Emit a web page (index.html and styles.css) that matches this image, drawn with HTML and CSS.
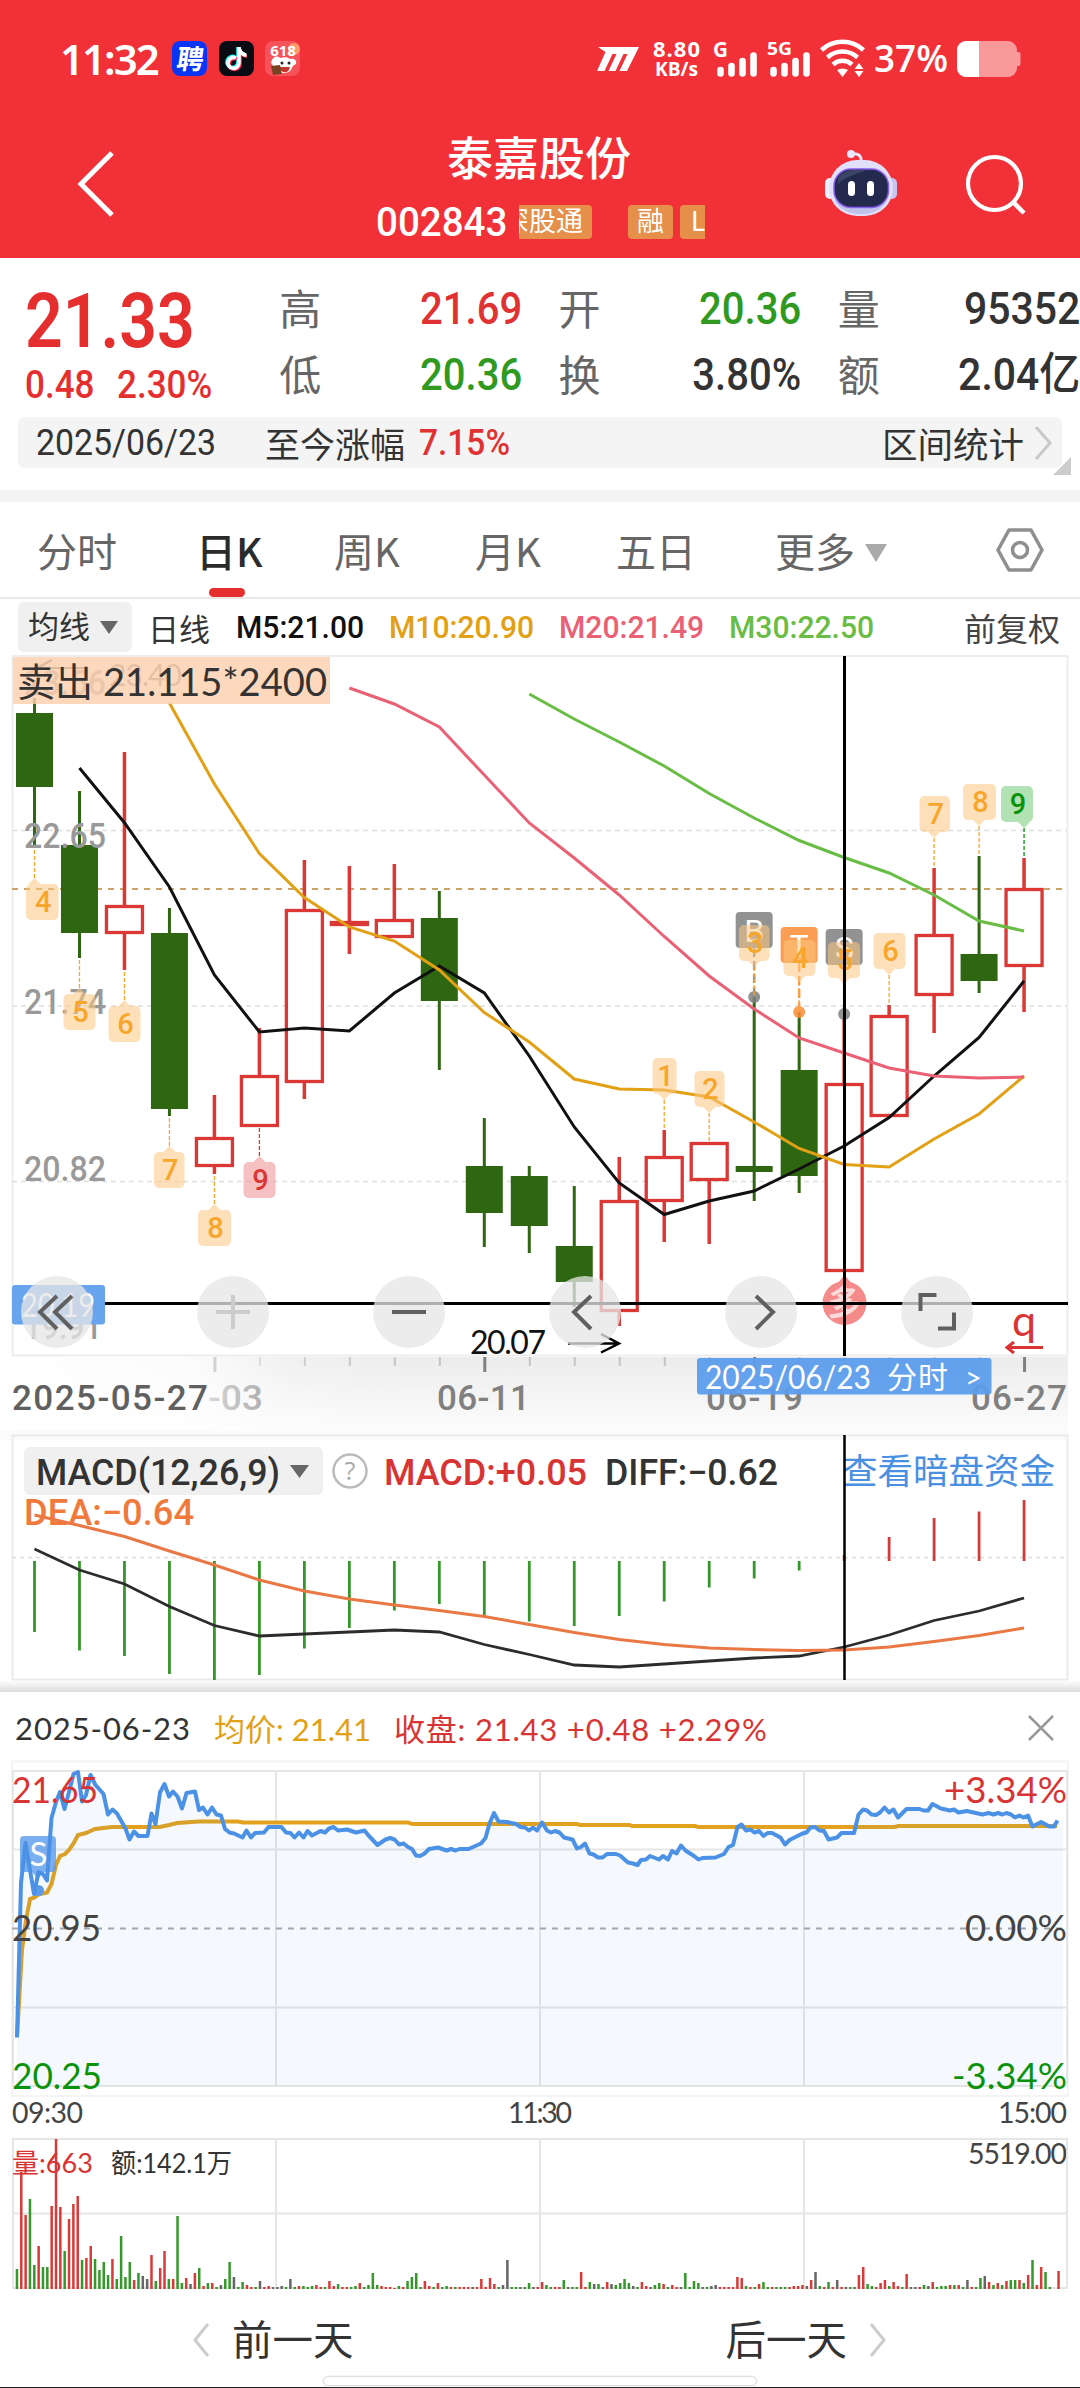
FILE: index.html
```html
<!DOCTYPE html>
<html lang="zh-CN">
  <head>
    <meta charset="utf-8">
    <title>泰嘉股份 002843</title>
    <link rel="stylesheet" href="styles.css">
  </head>
<body>
    <div id="header">
        <div class="statusbar">
            <div class="time">11:32</div>
            <svg class="app" viewBox="0 0 35 35">
                <rect width="35" height="35" rx="8" fill="#0a35f5"/>
                <text x="18" y="28" font-size="27" font-weight="bold" fill="#fff" text-anchor="middle" transform="skewX(-8) translate(3 0)">聘</text>
            </svg>
            <svg class="app" viewBox="0 0 35 35">
                <rect width="35" height="35" rx="8" fill="#0b0b14"/>
                <g fill="none" stroke-width="3.6">
                    <path d="M16 16a5.500 5.500 0 1 0 3 5V6c0 4 3 7 7 7" stroke="#25f4ee"/>
                    <path d="M18 18a5.500 5.500 0 1 0 3 5V8c0 4 3 7 7 7" stroke="#fe2c55"/>
                    <path d="M17 17a5.500 5.500 0 1 0 3 5V6c0 4 3 8 7.500 8" stroke="#fff"/>
                </g>
            </svg>
            <svg class="app" viewBox="0 0 35 35">
                <rect width="35" height="35" rx="8" fill="#f5525a"/>
                <circle cx="29" cy="8" r="6" fill="#ff9a6b"/>
                <path d="M6 22c2-8 7-7 9-5 4-1 8-1 10 1 5-1 7 2 6 5-3 1-4 3-5 6-3 4-12 4-15 0-2-2-3-5-5-7z" fill="#fff"/>
                <path d="M14 26h11c-1 7-9 7-11 0z" fill="#c7352f"/>
                <circle cx="17" cy="22" r="1.500" fill="#222"/><circle cx="24" cy="22" r="1.500" fill="#222"/>
                <path d="M6 25l9-1 2 9-9 1z" fill="#7a4220"/>
                <text x="18" y="15" font-size="15" font-weight="bold" fill="#fff" text-anchor="middle">618</text>
            </svg>
            <svg class="signals" viewBox="590 30 440 56">
                <path d="M598 47h41l-12 24h-7.500l8-17h-4l-8 17h-7l8-17h-4l-8 17h-7.500l8.500-19z" fill="#fff"/>
                <g fill="#fff" font-weight="bold">
                    <text x="653" y="56.500" font-size="22" textLength="47">8.80</text>
                    <text x="655" y="76" font-size="20" textLength="43" lengthAdjust="spacingAndGlyphs">KB/s</text>
                    <text x="713" y="57" font-size="21" textLength="15" lengthAdjust="spacingAndGlyphs">G</text>
                    <text x="767" y="54.500" font-size="18" textLength="25" lengthAdjust="spacingAndGlyphs">5G</text>
                </g>
                <g stroke="#fff" stroke-width="6.600" stroke-linecap="round">
                    <path d="M720.500 70v3.500M731.500 66v7.500M742.500 61v12.500M753.500 55.500v18"/>
                    <path d="M773.500 70v3.500M784.500 66v7.500M795.500 61v12.500M806.500 55.500v18"/>
                </g>
                <g fill="none" stroke="#fff" stroke-width="4.500">
                    <path d="M821.500 50a31 31 0 0 1 42 0"/>
                    <path d="M827.500 57.500a22 22 0 0 1 30 0"/>
                    <path d="M833 64.500a14 14 0 0 1 19 0"/>
                </g>
                <path d="M837 70q5.500-3 11 0l-5.500 7z" fill="#fff"/>
                <path d="M859 63l4.500 6h-9zM859 77l4.500-6h-9z" fill="#fff"/>
                <text x="874" y="72" font-size="38" font-weight="600" fill="#fff" textLength="74" lengthAdjust="spacingAndGlyphs">37%</text>
                <rect x="957" y="41" width="60" height="36" rx="9" fill="#fa999c"/>
                <path d="M1017 52h1.500a2 2 0 0 1 2 2v10a2 2 0 0 1-2 2h-1.500z" fill="#fa999c"/>
                <path d="M979 41v36h-13a9 9 0 0 1-9-9v-18a9 9 0 0 1 9-9z" fill="#fff"/>
            </svg>
        </div>
        <div class="titlebar">
            <svg class="back" viewBox="0 0 40 70"><path d="M36 4L5 35l31 31" fill="none" stroke="#fff" stroke-width="5"/></svg>
            <div class="title">
                <div class="name">泰嘉股份</div>
                <div class="code">
                    <span class="num">002843</span>
                    <div class="tags"><i class="cut">深股通</i><i>融</i><i class="level">L2</i></div>
                </div>
            </div>
            <svg class="robot" viewBox="824 148 76 70">
                <path d="M861 162c1-7-4-9-9-8" fill="none" stroke="#e9e6fb" stroke-width="3"/>
                <circle cx="851" cy="154" r="4" fill="#e9e6fb"/>
                <rect x="825" y="178" width="10" height="21" rx="5" fill="#f3f0ff"/>
                <rect x="887" y="178" width="10" height="21" rx="5" fill="#c9c3f0"/>
                <rect x="829" y="160" width="64" height="56" rx="28" fill="#e2dff8"/>
                <path d="M835 200c6 18 44 20 52 0-8 10-40 12-52 0z" fill="#c0c3ea"/>
                <rect x="834" y="169" width="54.500" height="38.500" rx="17" fill="#232a4d" stroke="#8a5cf0" stroke-width="1.500"/>
                <path d="M838 178c5-8 16-9 28-8-8 4-20 6-28 14z" fill="#3c4566"/>
                <rect x="848" y="181" width="7" height="15" rx="3.500" fill="#fff"/>
                <rect x="867" y="181" width="7" height="15" rx="3.500" fill="#fff"/>
            </svg>
            <svg class="search" viewBox="0 0 64 64"><circle cx="31.500" cy="29.500" r="26.500" fill="none" stroke="#fff" stroke-width="4.200"/><path d="M50 48l11 11" stroke="#fff" stroke-width="4.500"/></svg>
        </div>
    </div>

    <div id="quote">
        <div class="price">
            <div class="last"><span class="num">21.33</span></div>
            <div class="change"><span class="num">0.48</span><span class="num">2.30%</span></div>
        </div>
        <dl class="c1">
            <dt>高</dt><dd class="up">21.69</dd>
            <dt>低</dt><dd class="down">20.36</dd>
        </dl>
        <dl class="c2">
            <dt>开</dt><dd class="down">20.36</dd>
            <dt>换</dt><dd>3.80%</dd>
        </dl>
        <dl class="c3">
            <dt>量</dt><dd>95352</dd>
            <dt>额</dt><dd>2.04亿</dd>
        </dl>
    </div>
    <div id="range">
        <span class="num date">2025/06/23</span>
        <span class="label">至今涨幅</span>
        <span class="num up">7.15%</span>
        <span class="stat">区间统计</span>
        <svg class="arrow" viewBox="0 0 20 36"><path d="M3 2l14 16L3 34" fill="none" stroke="#c8c8c8" stroke-width="3"/></svg>
        <div class="corner"></div>
    </div>

    <div id="tabs">
        <div class="tab">分时</div>
        <div class="tab k on">日K</div>
        <div class="tab k2">周K</div>
        <div class="tab k2">月K</div>
        <div class="tab">五日</div>
        <div class="tab more">更多<b></b></div>
        <svg class="setting" viewBox="0 0 48 46"><path d="M13 3h22l11 20-11 20H13L2 23z" fill="none" stroke="#8f8f8f" stroke-width="3.600" stroke-linejoin="round"/><circle cx="24" cy="23" r="7.500" fill="none" stroke="#8f8f8f" stroke-width="3.600"/></svg>
    </div>

    <div id="legend">
        <div class="pick">均线<b></b></div>
        <span class="period">日线</span>
        <span class="ma m5">M5:21.00</span>
        <span class="ma m10">M10:20.90</span>
        <span class="ma m20">M20:21.49</span>
        <span class="ma m30">M30:22.50</span>
        <span class="adjust">前复权</span>
    </div>

    <svg id="kline" viewBox="0 655 1080 775">
        <defs>
            <linearGradient id="fade" x1="0" y1="0" x2="0" y2="1"><stop offset="0" stop-color="#ececec"/><stop offset="1" stop-color="#fcfcfc"/></linearGradient>
            <linearGradient id="veil" x1="0" y1="0" x2="1" y2="0"><stop offset="0" stop-color="#fff"/><stop offset=".45" stop-color="#fff" stop-opacity=".8"/><stop offset=".7" stop-color="#fff" stop-opacity=".2"/><stop offset="1" stop-color="#fff" stop-opacity="0"/></linearGradient>
        </defs>
        <rect x="0" y="1357" width="1068" height="73" fill="url(#fade)"/>
        <g id="ticks"></g>
        <g class="axis">
            <text x="208" y="1410" textLength="55" lengthAdjust="spacingAndGlyphs">-03</text>
            <text x="437" y="1410" textLength="93">06-11</text>
            <text x="706" y="1410" textLength="97">06-19</text>
            <text x="971" y="1410" textLength="96">06-27</text>
        </g>
        <rect x="0" y="1357" width="420" height="73" fill="url(#veil)"/>
        <text class="axis first" x="12" y="1410" textLength="196">2025-05-27</text>
        <rect x="12.500" y="656" width="1055" height="699.500" fill="none" stroke="#ededed" stroke-width="2"/>
        <path d="M12 830.500H1067M12 1006H1067M12 1181.500H1067" stroke="#dedede" stroke-width="1.500" stroke-dasharray="5 4"/>
        <path d="M12 889H1067" stroke="#c9a468" stroke-width="2" stroke-dasharray="6 6"/>
        <g id="candles"></g>
        <g id="ma"></g>
        <g class="price-label">
            <text x="24" y="695" textLength="82" lengthAdjust="spacingAndGlyphs">23.56</text>
            <text x="24" y="848" textLength="82" lengthAdjust="spacingAndGlyphs">22.65</text>
            <text x="24" y="1014" textLength="82" lengthAdjust="spacingAndGlyphs">21.74</text>
            <text x="24" y="1181" textLength="82" lengthAdjust="spacingAndGlyphs">20.82</text>
            <text x="24" y="1339" textLength="78" lengthAdjust="spacingAndGlyphs">19.91</text>
        </g>
        <text class="lato" x="109" y="686" font-size="30" fill="#777" textLength="73">23.40</text>
        <path d="M52 660l-15 8h48" fill="none" stroke="#555" stroke-width="2"/>
        <g id="badges"></g>
        <rect x="13" y="657" width="317" height="47" fill="#fdd0ae" fill-opacity=".82"/>
        <text class="lato" x="17" y="695.500" font-size="39" fill="#333" textLength="310" lengthAdjust="spacingAndGlyphs">卖出 21.115*2400</text>
        <text class="lato" x="470" y="1354" font-size="32" fill="#111" textLength="76">20.07</text>
        <path d="M568 1343.500h51M601 1334l18 9.500-18 9" fill="none" stroke="#000" stroke-width="2.500"/>
        <g fill="#f58a8a"><circle cx="844.500" cy="1303" r="22"/><path d="M844.500 1275l11 13h-22z"/></g>
        <text x="844.500" y="1315" font-size="34" font-weight="bold" fill="#fbdada" text-anchor="middle">多</text>
        <path d="M844.500 656V1356M12 1303.500H1068" stroke="#000" stroke-width="3"/>
        <rect x="12" y="1285" width="93" height="39.500" rx="3" fill="#68a4ee"/>
        <text class="lato" x="21" y="1316.500" font-size="32" fill="#fff" textLength="74" lengthAdjust="spacingAndGlyphs">20.19</text>
        <rect x="697" y="1358" width="294.500" height="36.500" rx="3" fill="#5b9cec" fill-opacity=".94"/>
        <g class="lato" font-size="32" fill="#fff">
            <text x="705" y="1388.500" textLength="166" lengthAdjust="spacingAndGlyphs">2025/06/23</text>
            <text x="887" y="1388" font-size="30" textLength="61">分时</text>
            <text x="965" y="1388" font-size="29">&gt;</text>
        </g>
        <text class="lato" x="1012" y="1336" font-size="43" fill="#d93434">q</text>
        <path d="M1043 1347.500h-35M1014 1342l-7 5.500 7 5.500" fill="none" stroke="#d93434" stroke-width="3"/>
        <g class="tools">
            <circle cx="57" cy="1312" r="36"/>
            <circle cx="233" cy="1312" r="36"/>
            <circle cx="409" cy="1312" r="36"/>
            <circle cx="585" cy="1312" r="36"/>
            <circle cx="761" cy="1312" r="36"/>
            <circle cx="937" cy="1312" r="36"/>
            <path d="M57 1296l-17 16 17 17M72 1296l-17 16 17 17"/>
            <path class="off" d="M216 1312h34M233 1295v34"/>
            <path d="M392 1312h34"/>
            <path d="M591 1296l-17 16 17 17"/>
            <path d="M756 1296l17 16-17 17"/>
            <path d="M920.500 1311v-16h16M938 1328.500h16v-16"/>
        </g>
    </svg>

    <svg id="macd" viewBox="0 1430 1080 262">
        <rect x="0" y="1430" width="1068" height="10" fill="#fbfbfb"/>
        <rect x="12.500" y="1435.500" width="1055" height="244" fill="none" stroke="#ebebeb" stroke-width="2"/>
        <path d="M12 1557.500H1067" stroke="#e3e3e3" stroke-width="2" stroke-dasharray="4 4"/>
        <rect x="24" y="1447" width="299" height="48" rx="6" fill="#f0f0f0"/>
        <path d="M290 1465h19l-9.500 13z" fill="#666"/>
        <circle cx="350" cy="1471" r="16.500" fill="none" stroke="#bbb" stroke-width="2.500"/>
        <text x="350" y="1480" font-size="25" fill="#aaa" text-anchor="middle">?</text>
        <g class="values">
            <text x="36" y="1485" fill="#333" textLength="244" lengthAdjust="spacingAndGlyphs">MACD(12,26,9)</text>
            <text x="384" y="1485" fill="#d93434" textLength="203" lengthAdjust="spacingAndGlyphs">MACD:+0.05</text>
            <text x="605" y="1485" fill="#333" textLength="173" lengthAdjust="spacingAndGlyphs">DIFF:−0.62</text>
            <text x="24" y="1524.500" fill="#f07a3c" textLength="170" lengthAdjust="spacingAndGlyphs">DEA:−0.64</text>
        </g>
        <text x="842" y="1484" font-size="35.500" fill="#4a90e2" textLength="213">查看暗盘资金</text>
        <g id="macdbars"></g>
        <path d="M844.500 1435V1680" stroke="#000" stroke-width="2.500"/>
    </svg>

    <div id="dayinfo">
        <span class="d">2025-06-23</span>
        <span class="avg">均价: 21.41</span>
        <span class="close">收盘: 21.43 +0.48 +2.29%</span>
        <svg class="x" viewBox="0 0 28 28"><path d="M2 2l24 24M26 2L2 26" stroke="#999" stroke-width="2.500"/></svg>
    </div>

    <svg id="minute" viewBox="0 1760 1080 540">
        <path d="M12 1761.500H1068V2096H12z" fill="none" stroke="#f4f4f4" stroke-width="2"/>
        <path d="M13 1771H1067V2086H13zM276 1771V2086M540 1771V2086M804 1771V2086M12 1849.500H1067M12 2007.500H1067" fill="none" stroke="#e6e6e6" stroke-width="2"/>
        <path d="M12 1928.500H1067" stroke="#a5a8ac" stroke-width="2" stroke-dasharray="6 6"/>
        <g id="trend"></g>
        <g font-size="36" class="lato">
            <text x="12" y="1803" fill="#d93434" textLength="86" lengthAdjust="spacingAndGlyphs">21.65</text>
            <text x="12" y="1941" fill="#444" textLength="89" lengthAdjust="spacingAndGlyphs">20.95</text>
            <text x="12" y="2089" fill="#0a930a" textLength="90" lengthAdjust="spacingAndGlyphs">20.25</text>
            <text x="944" y="1803" fill="#d93434" textLength="123" lengthAdjust="spacingAndGlyphs">+3.34%</text>
            <text x="965" y="1941" fill="#444" textLength="102" lengthAdjust="spacingAndGlyphs">0.00%</text>
            <text x="952" y="2089" fill="#0a930a" textLength="115" lengthAdjust="spacingAndGlyphs">-3.34%</text>
        </g>
        <g font-size="28.500" class="lato" fill="#444">
            <text x="12" y="2122.500" textLength="71">09:30</text>
            <text x="508" y="2122.500" textLength="64">11:30</text>
            <text x="998" y="2122.500" textLength="69">15:00</text>
            <text x="968" y="2164" textLength="99">5519.00</text>
        </g>
        <path d="M13 2139H1067V2288H13zM276 2139V2288M540 2139V2288M804 2139V2288M12 2213.500H1067" fill="none" stroke="#e6e6e6" stroke-width="2"/>
        <g id="volume"></g>
        <g font-size="27" class="lato">
            <text x="12" y="2173" fill="#d93434" textLength="81" lengthAdjust="spacingAndGlyphs">量:663</text>
            <text x="111" y="2173" fill="#333" textLength="121" lengthAdjust="spacingAndGlyphs">额:142.1万</text>
        </g>
    </svg>

    <div id="pager">
        <div class="prev"><svg viewBox="0 0 20 36"><path d="M17 2L4 18l13 16" fill="none" stroke="#ccc" stroke-width="3"/></svg>前一天</div>
        <div class="next">后一天<svg viewBox="0 0 20 36"><path d="M3 2l13 16L3 34" fill="none" stroke="#ccc" stroke-width="3"/></svg></div>
    </div>
    <div id="homebar"><div></div></div>
    <script src="chart.js"></script>
</body>
</html>
```
FILE: styles.css
```css
* {
    margin: 0;
    padding: 0;
    box-sizing: border-box;
}
body {
    width: 1080px;
    height: 2388px;
    overflow: hidden;
    background: #fff;
    color: #333;
    font-family: Lato, "Noto Sans CJK SC", sans-serif;
}
svg {
    display: block;
    flex: none;
}
svg text {
    font-family: "Open Sans", "Noto Sans CJK SC", sans-serif;
}
svg .lato, svg .lato text {
    font-family: Lato, "Noto Sans CJK SC", sans-serif;
}
svg .values text, .axis, svg .axis text, svg .axis.first, svg .price-label text, svg #badges text {
    font-family: Roboto, "Noto Sans CJK SC", sans-serif;
}
.num, dd, .ma {
    display: inline-block;
    font-family: Roboto, "Noto Sans CJK SC", sans-serif;
    font-weight: 500;
    transform: scaleX(0.89);
    transform-origin: left center;
    white-space: nowrap;
}
.up {
    color: #e03232;
}
.down {
    color: #2f9a1f;
}

/* header */
#header {
    height: 258px;
    background: #f23038;
    color: #fff;
}
.statusbar {
    height: 116px;
    padding-left: 60px;
    display: flex;
    align-items: center;
}
.statusbar .time {
    width: 112px;
    font-family: "Noto Sans", sans-serif;
    font-size: 42px;
    font-weight: 600;
    letter-spacing: -2px;
}
.statusbar .app {
    width: 35px;
    height: 35px;
    margin-right: 11.5px;
}
.statusbar .signals {
    width: 440px;
    height: 56px;
    margin-left: 278px;
}
.titlebar {
    height: 142px;
    display: flex;
    padding-left: 76px;
}
.back {
    width: 40px;
    height: 70px;
    margin-top: 33px;
}
.title {
    width: 330px;
    margin-left: 260px;
}
.title .name {
    height: 84px;
    line-height: 84px;
    padding-left: 71px;
    font-size: 46px;
    font-weight: 500;
}
.title .code {
    display: flex;
    height: 44px;
    align-items: center;
}
.title .code .num {
    width: 143px;
    font-size: 41px;
    line-height: 44px;
    transform: scaleX(0.94);
}
.tags {
    display: flex;
    width: 186px;
    height: 34px;
    overflow: hidden;
}
.tags i {
    flex: none;
    height: 34px;
    padding: 0 9px;
    margin-right: 7px;
    border-radius: 4px;
    background: #e58f4a;
    font-size: 27px;
    line-height: 32px;
    font-style: normal;
}
.tags .cut {
    margin-left: -26px;
    margin-right: 36px;
}
.tags .level {
    padding-left: 11px;
}
.robot {
    width: 76px;
    height: 70px;
    margin: 32px 0 0 118px;
}
.search {
    width: 64px;
    height: 64px;
    margin: 38px 0 0 63px;
}

/* quote */
#quote {
    height: 159px;
    display: flex;
    overflow: hidden;
}
.price {
    width: 280px;
    padding: 17px 0 0 25px;
    color: #e52f2f;
}
.price .last {
    height: 86px;
    font-size: 76px;
    line-height: 86px;
}
.price .last .num {
    transform: scaleX(0.87);
    font-weight: 600;
}
.price .change {
    height: 44px;
    font-size: 38.5px;
    line-height: 44px;
}
.change .num {
    transform: scaleX(0.91);
}
.change .num:first-child {
    width: 92px;
}
dl {
    display: grid;
    grid-template-columns: 42px 1fr;
    grid-template-rows: 66px 66px;
    align-items: center;
    width: 244px;
    height: 132px;
    margin: 18px 36px 0 0;
}
dl.c3 {
    width: 243px;
    margin-right: 0;
}
dt {
    font-size: 42px;
    line-height: 66px;
    color: #666;
}
dd {
    font-size: 45px;
    line-height: 66px;
    text-align: right;
    transform-origin: right center;
}
.c3 dd {
    transform: scaleX(0.91);
}
#range {
    position: relative;
    display: flex;
    align-items: center;
    height: 51px;
    margin: 0 18px 22px;
    padding-left: 18px;
    border-radius: 6px;
    background: #f4f4f4;
    font-size: 35px;
}
#range .date {
    width: 229px;
    font-size: 36px;
    font-weight: 400;
    transform: scaleX(0.94);
}
#range .label {
    width: 154px;
}
#range .up {
    font-size: 36px;
    transform: scaleX(0.93);
}
#range .stat {
    margin-left: auto;
    font-size: 35.5px;
}
#range .arrow {
    width: 20px;
    height: 36px;
    margin: 0 9px 0 9px;
}
#range .corner {
    position: absolute;
    right: -9px;
    bottom: -7px;
    border-left: 18px solid transparent;
    border-bottom: 18px solid #ccc;
}

/* tabs */
#tabs {
    display: flex;
    height: 109px;
    padding: 0 36px 0 37px;
    border-top: 12px solid #f4f4f4;
    border-bottom: 2px solid #e8e8e8;
    align-items: center;
    font-family: "Noto Sans CJK SC", sans-serif;
    font-size: 40px;
    color: #666;
}
.tab {
    position: relative;
    width: 159px;
    height: 95px;
    line-height: 97px;
    white-space: nowrap;
}
.tab.k {
    width: 138px;
}
.tab.k2 {
    width: 141px;
}
.tab.on {
    color: #2b2b2b;
    font-weight: 500;
}
.tab.on::after {
    content: "";
    position: absolute;
    left: 13px;
    bottom: 0;
    width: 36px;
    height: 9px;
    border-radius: 5px;
    background: #e62e2e;
}
.tab b, .pick b {
    display: inline-block;
    margin-left: 10px;
    border: 11px solid transparent;
    border-top: 18px solid #aaa;
    border-bottom: 0;
    vertical-align: 5px;
}
.setting {
    width: 48px;
    height: 46px;
    margin-left: auto;
}

/* moving averages */
#legend {
    display: flex;
    height: 56px;
    padding: 3px 20px 3px 18px;
    align-items: center;
    font-size: 31px;
}
.pick {
    width: 114px;
    height: 50px;
    padding-left: 10px;
    line-height: 49px;
    border-radius: 6px;
    background: #f0f0f0;
    white-space: nowrap;
}
.pick b {
    border-width: 13px 9px 0;
    border-top-color: #666;
    margin-left: 10px;
    vertical-align: 4px;
}
.period {
    margin-left: 16px;
    width: 88px;
}
.ma {
    width: 170px;
    font-size: 32px;
    transform: scaleX(0.94);
}
.m5 { color: #111; width: 153px; }
.m10 { color: #e2a015; }
.m20 { color: #ea6074; }
.m30 { color: #69bd45; }
.adjust {
    margin-left: auto;
    font-size: 32px;
    color: #444;
}

/* charts */
#kline {
    width: 1080px;
    height: 775px;
}
.axis {
    font-size: 35px;
    fill: #808080;
    font-weight: 500;
}
.axis.first {
    fill: #606060;
}
.price-label {
    font-size: 35px;
    font-weight: 500;
    fill: #999;
}
.tools circle {
    fill: #e6e6e6;
    fill-opacity: 0.76;
}
.tools path {
    fill: none;
    stroke: #606060;
    stroke-width: 4;
}
.tools .off {
    stroke: #ccc;
}
#macd {
    width: 1080px;
    height: 262px;
    background: linear-gradient(to bottom, #fff 250px, #dcdcdc 262px);
}
.values text {
    font-size: 36px;
    font-weight: 500;
}

/* day detail */
#dayinfo {
    display: flex;
    height: 68px;
    padding: 3px 25px 0 15px;
    align-items: center;
    font-size: 31px;
    white-space: nowrap;
}
#dayinfo .d {
    width: 199px;
    letter-spacing: 0.9px;
}
#dayinfo .avg {
    width: 180px;
    color: #e2a015;
}
#dayinfo .close {
    color: #d93434;
    letter-spacing: 0.8px;
}
#dayinfo .x {
    width: 28px;
    height: 28px;
    margin-left: auto;
}
#minute {
    width: 1080px;
    height: 540px;
}
#pager {
    display: flex;
    justify-content: space-between;
    height: 76px;
    padding: 3px 192px 0 191px;
    font-size: 40.5px;
    line-height: 73px;
}
#pager div {
    display: flex;
    align-items: center;
    gap: 21px;
}
#pager svg {
    width: 20px;
    height: 36px;
}
#homebar {
    height: 12px;
    border-bottom: 1px solid #222;
}
#homebar div {
    width: 434px;
    height: 10px;
    margin: 0 auto;
    border: 1px solid #ddd;
    border-radius: 5px;
    box-shadow: 0 0 2px #ddd;
}
```
FILE: chart.js
```js
var GREEN = "#2f6612", RED = "#da3735";

function put(id, html) {
    document.getElementById(id).innerHTML += html;
}
function cx(i) {
    return 34.5 + 44.98 * i;
}
function line(arr, start, color, width) {
    var pts = arr.map(function (y, i) { return cx(i + start) + "," + y; }).join(" ");
    return '<polyline points="' + pts + '" fill="none" stroke="' + color + '" stroke-width="' + width + '"/>';
}

// [direction, body top, body bottom, wick top, wick bottom]
var candles = [
    ["g", 713, 787, 698, 848], ["g", 845, 933, 791, 958], ["r", 905, 934, 752, 970], ["g", 933, 1109, 908, 1116],
    ["r", 1137, 1167, 1095, 1174], ["r", 1075, 1127, 1028, 1127], ["r", 909, 1083, 860, 1099], ["r", 921, 926, 866, 954],
    ["r", 919, 938, 864, 938], ["g", 918, 1001, 891, 1070], ["g", 1166, 1213, 1118, 1247], ["g", 1176, 1226, 1166, 1253],
    ["g", 1246, 1282, 1186, 1307], ["r", 1200, 1312, 1157, 1326], ["r", 1156, 1202, 1130, 1242], ["r", 1142, 1181, 1142, 1244],
    ["g", 1166, 1172, 997, 1201], ["g", 1070, 1176, 1012, 1193], ["r", 1083, 1272, 1018, 1272], ["r", 1015, 1117, 1005, 1117],
    ["r", 934, 996, 868, 1033], ["g", 954, 981, 856, 993], ["r", 888, 967, 858, 1012]
];
candles.forEach(function (c, i) {
    var x = cx(i), s = "";
    if (c[0] == "g") {
        s += '<path d="M' + x + " " + c[3] + "V" + c[4] + '" stroke="' + GREEN + '" stroke-width="3"/>';
        s += '<rect x="' + (x - 18.5) + '" y="' + c[1] + '" width="37" height="' + (c[2] - c[1]) + '" fill="' + GREEN + '"/>';
    } else {
        s += '<path d="M' + x + " " + c[3] + "V" + c[1] + "M" + x + " " + c[2] + "V" + c[4] + '" stroke="' + RED + '" stroke-width="3.5"/>';
        s += '<rect x="' + (x - 18) + '" y="' + (c[1] + 1.5) + '" width="36" height="' + (c[2] - c[1] - 3) + '" fill="#fff" stroke="' + RED + '" stroke-width="3.3"/>';
    }
    put("candles", s);
});

put("ma",
    line([768, 822.7, 887, 975, 1032, 1028, 1031, 993, 966, 993, 1056, 1127, 1183, 1214.5, 1201, 1191, 1169, 1146, 1117.5, 1076, 1037.5, 981], 1, "#111", 3) +
    line([703, 784, 853.5, 897.5, 927, 941, 970, 1012.5, 1042, 1079, 1089, 1090, 1097, 1122, 1148.5, 1164.5, 1167, 1139, 1114, 1076], 3, "#e2a015", 3) +
    line([688, 704, 727, 775, 823, 858, 895, 936.5, 976, 1009, 1038, 1053, 1068, 1076, 1078, 1077], 7, "#ea6074", 3) +
    line([694, 719, 742, 766, 793.5, 818, 840.5, 857.5, 873, 895, 921, 931], 11, "#69bd45", 3));

// axis ticks
for (var t = 4; t < 23; t++) {
    var big = t == 4 || t == 10 || t == 16 || t == 22;
    put("ticks", '<path d="M' + (cx(t) + 0.5) + " 1357v" + (big ? 15 : 9) + '" stroke="' + (big ? "#808080" : "#c4c4c4") + '" stroke-width="' + (big ? 3 : 2) + '"/>');
}

// trade marks
[[16, "B", 912, "#808080", 997], [17, "T", 927, "#fb8c36", 1012], [18, "S", 929, "#808080", 1014]].forEach(function (m) {
    var x = cx(m[0]);
    put("badges", '<g opacity=".85"><path d="M' + x + " " + (m[2] + 36) + "V" + m[4] + '" stroke="' + m[3] + '" stroke-width="2.5" stroke-dasharray="9 4"/>' +
        '<rect x="' + (x - 18.5) + '" y="' + m[2] + '" width="37" height="36" rx="4" fill="' + m[3] + '"/>' +
        '<circle cx="' + x + '" cy="' + m[4] + '" r="6" fill="' + m[3] + '"/></g>' +
        '<text x="' + x + '" y="' + (m[2] + 30) + '" font-size="32" fill="#fff" text-anchor="middle">' + m[1] + "</text>");
});

// nine-turn counters: [candle, number, left, width, top, side, wick end]
[
    [0, 4, 26, 32.5, 884, "b", 848], [1, 5, 63.5, 32, 994, "b", 958], [2, 6, 108.5, 32, 1006, "b", 970], [3, 7, 154, 30.5, 1152, "b", 1116],
    [4, 8, 198, 33, 1210, "b", 1174], [5, 9, 243.5, 32, 1162, "b", 1127],
    [14, 1, 652.5, 24, 1058, "t", 1130], [15, 2, 694.5, 30, 1071, "t", 1143], [16, 3, 739, 30.5, 925, "t", 997], [17, 4, 783.5, 32, 940, "t", 1012],
    [18, 5, 828, 32, 942, "t", 1014], [19, 6, 873.5, 32, 933, "t", 1005], [20, 7, 919.5, 30.5, 796, "t", 868], [21, 8, 963, 33, 784, "t", 856],
    [22, 9, 1001, 32, 786, "t", 858]
].forEach(function (b) {
    var x = cx(b[0]), col = "#f7a62b", bg = "#fdc880", y = b[4], tip, from;
    if (b[1] == 9) {
        col = b[5] == "b" ? "#da3735" : "#0a930a";
        bg = b[5] == "b" ? "#f08f92" : "#74cb78";
    }
    if (b[5] == "b") {
        tip = "M" + (x - 6) + " " + y + "l6-6 6 6z";
        from = y - 6;
    } else {
        tip = "M" + (x - 6) + " " + (y + 36) + "l6 6 6-6z";
        from = y + 42;
    }
    put("badges", '<path d="M' + x + " " + from + "V" + b[6] + '" stroke="' + col + '" stroke-width="1.3" stroke-dasharray="4 2"/>' +
        '<g fill="' + bg + '" opacity=".55"><rect x="' + b[2] + '" y="' + y + '" width="' + b[3] + '" height="36" rx="5"/><path d="' + tip + '"/></g>' +
        '<text x="' + (b[2] + b[3] / 2 + 1) + '" y="' + (y + 28) + '" font-size="29" font-weight="500" fill="' + col + '" text-anchor="middle">' + b[1] + "</text>");
});

// MACD
[1632, 1650.5, 1656, 1674, 1680, 1675, 1648.5, 1628, 1610.5, 1604, 1616, 1621.5, 1626, 1616, 1601.5, 1587.5, 1578.5, 1570.5, 1555, 1537, 1518, 1511.5, 1500].forEach(function (y, i) {
    put("macdbars", '<path d="M' + cx(i) + " 1561V" + y + '" stroke="' + (y > 1561 ? "#35962a" : "#d23b3b") + '" stroke-width="2.8"/>');
});
put("macdbars",
    line([1549, 1570, 1584, 1606.5, 1625.5, 1636, 1634, 1632, 1630, 1632, 1644.5, 1654.5, 1665, 1667, 1664, 1661, 1658, 1656, 1647, 1635, 1620.5, 1611, 1598], 0, "#2c2c2c", 2.8) +
    line([1515, 1525.5, 1536.5, 1551, 1565, 1580, 1591, 1599, 1605, 1610.5, 1616.5, 1624.5, 1632.5, 1639.5, 1644.5, 1648, 1649.5, 1650.5, 1650, 1647, 1641.5, 1635.5, 1628], 0, "#ea7845", 3));

// intraday
var price = "17,2037.5 21,1883 25.5,1843 30.5,1873 34,1894 38.5,1872 43,1874 47,1880.5 51.5,1818 56,1802 60,1792 64.5,1809 69,1792 73.5,1774 78,1772 82,1801.5 86,1795 90.5,1775 95.5,1785 103.5,1794 108,1814.5 112.5,1809.5 117,1813.5 125.5,1828.5 129.5,1839.5 134,1831.5 138.5,1836 147.5,1836 151.5,1813.5 155.5,1824 160,1792.5 164.5,1784 169,1796.5 173,1791.5 177.5,1796.5 182,1808.5 186.5,1793 195,1791.5 199,1810 203,1807.5 207.5,1814.5 212,1807.5 216.5,1814.5 221,1815.5 225,1829 229.5,1832.5 234,1833.5 242.5,1837.5 246.5,1830.5 251,1837.5 255,1833 264,1832.5 268.5,1827 281.5,1827 286,1832.5 290.5,1833 294.5,1837.5 299,1832.5 303.5,1837.5 307.5,1831 312,1835.5 320.5,1831 325,1832.5 329,1828.5 333.5,1827 338,1830.5 347,1829.5 356,1832.5 364.5,1830.5 368.5,1835.5 377.5,1845 385.5,1839.5 390,1838 394.5,1839.5 399,1844.5 403.5,1843.5 408,1847 412,1849 416,1855.5 420,1856 424.5,1853.5 429,1849 438,1847.5 446.5,1850.5 451,1849 455.5,1850.5 459.5,1849 468.5,1849 481,1843.5 485.5,1838 489.5,1823.5 494,1813 498.5,1821.5 507,1822 516,1824 520.5,1827 525,1827.5 529,1830.5 533,1827.5 537,1830.5 " +
    "542,1822.5 547,1830.5 551,1832.5 555,1831 559.5,1832.5 564,1837.5 572.5,1839.5 577,1848.5 581,1847 585,1843.5 589.5,1853.5 593.5,1854.5 598,1857.5 602.5,1857.5 607,1854 616,1854 620,1855.5 628,1862.5 633,1863.5 637.5,1865 641,1860 646,1859.5 650,1856 659,1859.5 663,1856 668,1859.5 672,1851 676.5,1853.5 681,1845.5 685.5,1850.5 694,1856 698.5,1859.5 702.5,1858 715.5,1857.5 724,1854 728.5,1847 733,1845 737.5,1827 741.5,1824.5 746,1830.5 750.5,1829.5 754.5,1832.5 759,1831 763.5,1836 767.5,1833 772,1833 780.5,1837.5 785,1844.5 789.5,1840 802.5,1833.5 806.5,1832.5 810.5,1827.5 815,1827 819.5,1830.5 824,1831 828.5,1839.5 837,1837.5 841.5,1833 854,1833 858.5,1814.5 863,1809.5 867,1810.5 871.5,1814.5 876,1815 880,1812.5 884.5,1807.5 889,1812.5 893.5,1809.5 898,1817.5 906.5,1809 919.5,1809 923.5,1810.5 928,1810.5 932.5,1804 941,1808.5 950,1810.5 954,1809.5 958.5,1812.5 967,1811 982.5,1814.5 988.5,1813 993.5,1814.5 998,1813 1002.5,1814.5 1006.5,1813 1011,1814.5 1015,1817.5 1019.5,1815.5 1023.5,1817.5 1028,1815.5 1032.5,1826.5 1041,1822 1049.5,1826.5 1054,1826.5 1057.5,1820.5";
var average = "17,2037 22,1950 26,1920 30,1899 34.5,1897.5 38.5,1894.5 47,1892.5 51.5,1884 56,1865 60,1856 65,1854 69,1850 73.5,1843.5 78,1835 86,1833 95,1829 112,1827 160,1827 169,1825 177,1823 199,1821.5 238,1821.5 243,1822.5 408,1822.5 412,1824 577,1824 580,1825 629.5,1825 632,1826 695,1826 698,1827 895,1827 898,1826 1057,1826";
put("trend",
    '<polyline points="' + average + '" fill="none" stroke="#e2a21f" stroke-width="4"/>' +
    '<polygon points="17,2086 ' + price + ' 1063,1820 1063,2086" fill="#4a90e2" fill-opacity=".055"/>' +
    '<rect x="20" y="1836" width="36" height="36" rx="4" fill="#5b9bec" fill-opacity=".8"/>' +
    '<path d="M32 1872l6 7 6-7z" fill="#5b9bec" fill-opacity=".8"/><circle cx="38.5" cy="1890.500" r="5.500" fill="#5b9bec"/>' +
    '<polyline points="' + price + '" fill="none" stroke="#4b91e5" stroke-width="4" stroke-linejoin="round"/>' +
    '<text class="lato" x="38.500" y="1865.500" font-size="33" fill="#fff" text-anchor="middle">S</text>');

var vol = "g20 r117 r74 g90 g24 r43 g22 g22 r83 r150 r82 g38 r70 r85 r93 g29 r31 r43 g30 g19 g27 g14 r30 g10 g53 g12 g27 r9 g16 k13 k10 r34 g8 r21 r38 g10 r10 g73 g6 r11 " +
    "k5 r16 g21 r3 g6 r6 g2 k4 g10 g27 k12 g2 g7 r4 r2 g2 k8 r2 r3 k2 k2 k3 g2 k10 g2 r3 g3 g2 g3 r4 r2 g2 r8 r3 g5 r2 r2 g2 g3 r6 " +
    "g2 g4 g16 g4 r3 r2 r2 r1 g3 r2 g8 g12 g16 g2 r8 r3 g2 r6 g2 g3 r2 g2 r2 r2 r2 k2 r2 r10 r2 r11 r5 g2 k4 k29 g2 g2 k2 g2 g6 k2 " +
    "r2 r7 g4 g2 r2 r2 g9 k2 g2 g2 r17 r2 g7 k5 g5 k2 r7 k5 g4 g6 g10 g6 k3 g2 r7 r3 k2 g4 g6 r5 g2 r4 r2 k2 g16 g2 g8 g6 k2 g2 " +
    "k3 k4 r2 r2 r2 r2 r12 r11 g3 r2 g2 r5 g7 g2 r2 g2 g2 g2 r2 r3 r3 r4 k3 r9 k17 g3 r2 g7 r2 k9 r2 k2 g2 k2 r14 r22 g5 g3 r2 r6 " +
    "r9 g3 r7 r3 g2 r15 k2 k2 r2 g4 k3 r7 g2 g3 g3 r4 g4 r4 g2 k9 r2 g2 g11 k13 r7 g4 r6 g4 r8 g9 g9 r9 g6 r14 g29 r4 r22 g17 g2 g0 r18";
var volColor = { r: "#d83a3a", g: "#35982a", k: "#666" };
vol.split(" ").forEach(function (v, i) {
    var h = +v.slice(1);
    put("volume", '<rect x="' + (15.7 + 4.34 * i) + '" y="' + (2289 - h) + '" width="2.5" height="' + h + '" fill="' + volColor[v[0]] + '"/>');
});
```
